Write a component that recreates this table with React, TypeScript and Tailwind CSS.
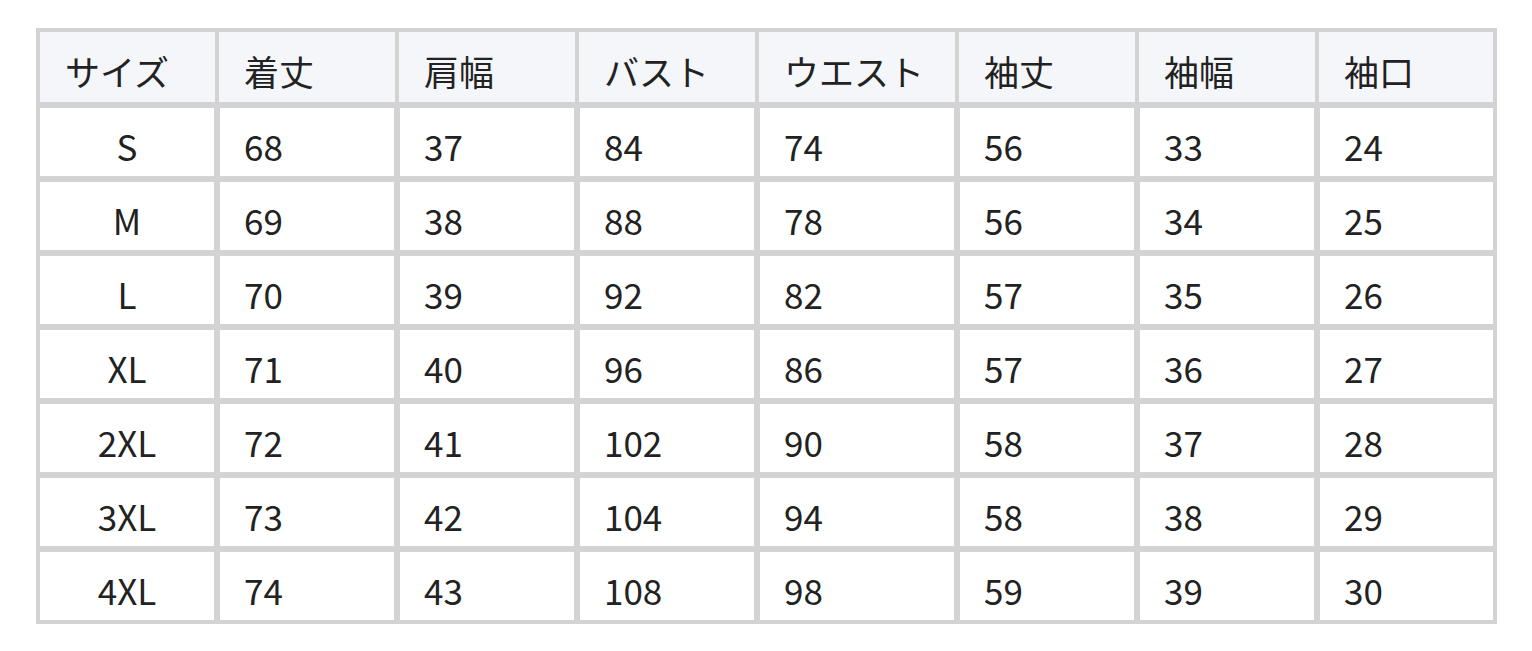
import React from 'react';

const headers = ['サイズ', '着丈', '肩幅', 'バスト', 'ウエスト', '袖丈', '袖幅', '袖口'];

const rows: (string | number)[][] = [
  ['S', 68, 37, 84, 74, 56, 33, 24],
  ['M', 69, 38, 88, 78, 56, 34, 25],
  ['L', 70, 39, 92, 82, 57, 35, 26],
  ['XL', 71, 40, 96, 86, 57, 36, 27],
  ['2XL', 72, 41, 102, 90, 58, 37, 28],
  ['3XL', 73, 42, 104, 94, 58, 38, 29],
  ['4XL', 74, 43, 108, 98, 59, 39, 30],
];

const font = { fontFamily: '"Noto Sans CJK JP", "Noto Sans", sans-serif' };

const App: React.FC = () => {
  return (
    <div className="w-[1532px] h-[651px] bg-white pt-[28px] pl-[36px]" style={font}>
      <div className="w-[1461px] bg-[#d3d3d3] p-[4px] flex flex-col gap-[6px] text-[35px] leading-none text-[#222]">
        <div className="grid grid-cols-[175px_176px_176px_176px_196px_176px_176px_174px] gap-x-[4px]">
          {headers.map((h) => (
            <div key={h} className="h-[70px] bg-[#f5f6fa] flex items-center pl-[25px] pt-[6px]">
              {h}
            </div>
          ))}
        </div>
        {rows.map((r) => (
          <div
            key={r[0]}
            className="grid grid-cols-[174px_174px_174px_174px_194px_174px_174px_173px] gap-x-[6px]"
          >
            {r.map((v, i) => (
              <div
                key={i}
                className={`h-[68px] bg-white flex items-center pt-[6px] ${
                  i === 0 ? 'justify-center' : 'pl-[24px]'
                }`}
              >
                {v}
              </div>
            ))}
          </div>
        ))}
      </div>
    </div>
  );
};

export default App;
